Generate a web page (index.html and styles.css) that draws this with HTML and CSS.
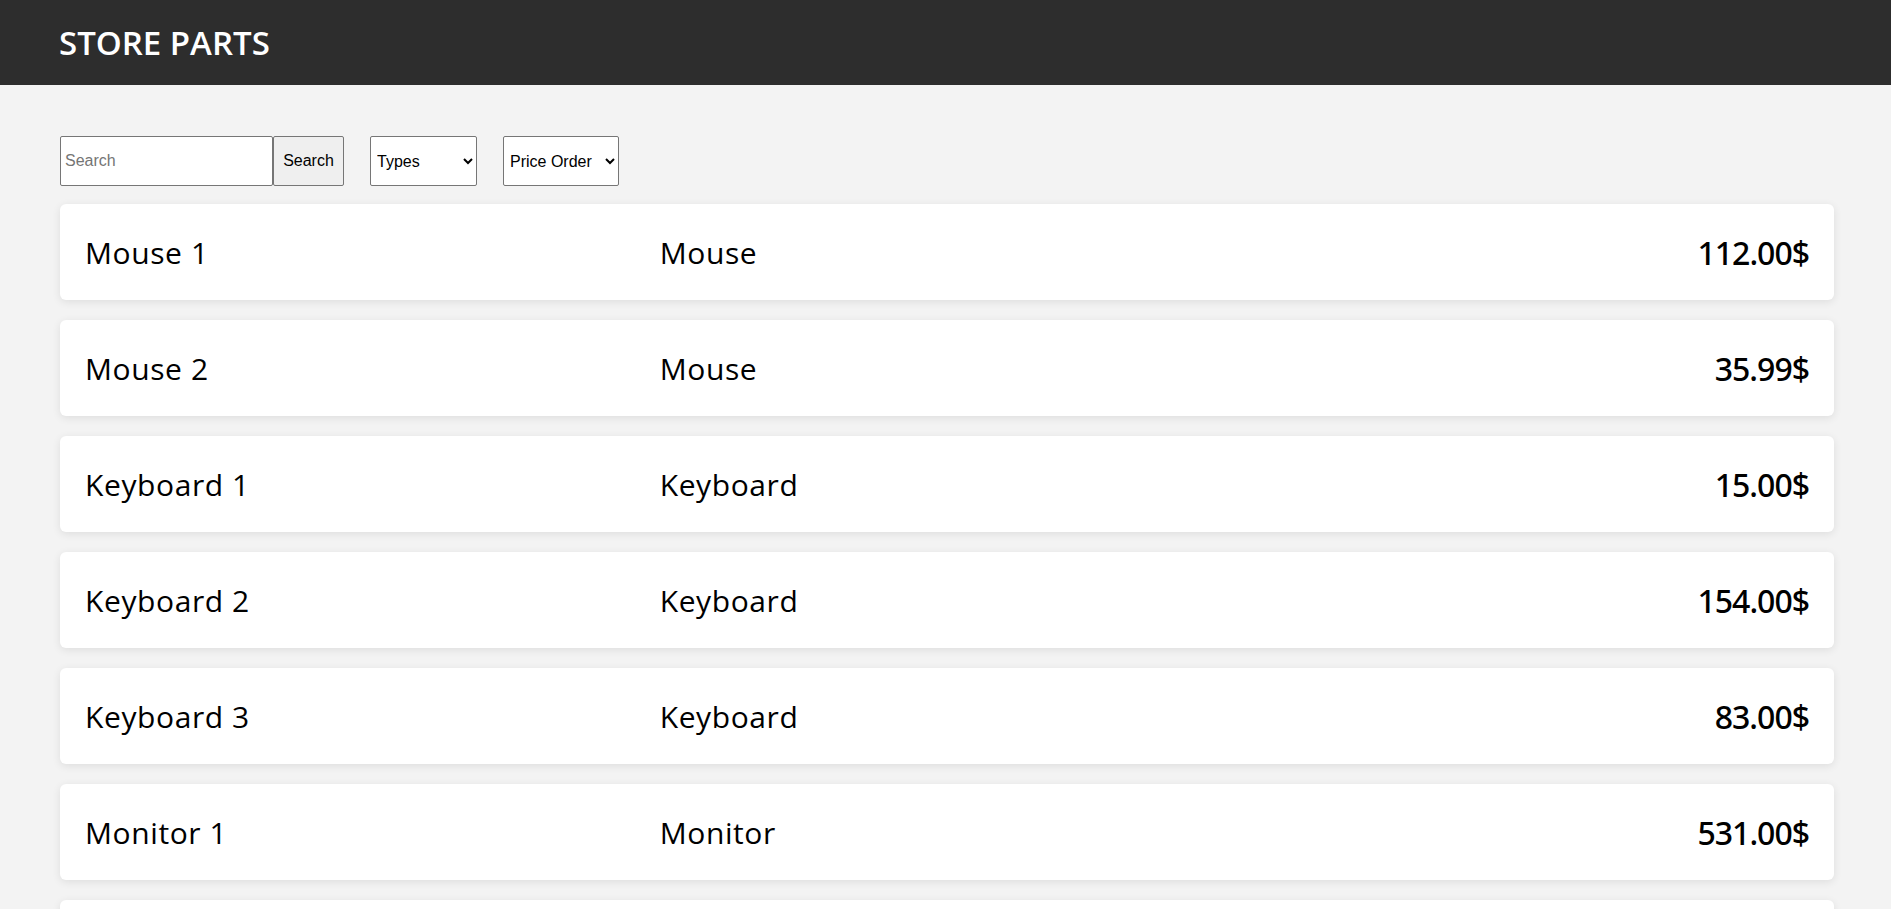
FILE: index.html
```html
<!DOCTYPE html>
<html lang="en">
<head>
<meta charset="utf-8">
<title>Store Parts</title>
<link rel="stylesheet" href="styles.css">
</head>
<body>
<header class="topbar">
  <h1 class="brand">STORE PARTS</h1>
</header>
<main class="content">
  <div class="toolbar">
    <div class="search-group">
      <input class="search-input" type="text" placeholder="Search">
      <button class="search-btn" type="button">Search</button>
    </div>
    <select class="select select-types">
      <option>Types</option>
      <option>Mouse</option>
      <option>Keyboard</option>
      <option>Monitor</option>
    </select>
    <select class="select select-price">
      <option>Price Order</option>
      <option>Ascending</option>
      <option>Descending</option>
    </select>
  </div>
  <ul class="parts">
    <li class="part"><span class="part-name">Mouse 1</span><span class="part-type">Mouse</span><span class="part-price">112.00$</span></li>
    <li class="part"><span class="part-name">Mouse 2</span><span class="part-type">Mouse</span><span class="part-price">35.99$</span></li>
    <li class="part"><span class="part-name">Keyboard 1</span><span class="part-type">Keyboard</span><span class="part-price">15.00$</span></li>
    <li class="part"><span class="part-name">Keyboard 2</span><span class="part-type">Keyboard</span><span class="part-price">154.00$</span></li>
    <li class="part"><span class="part-name">Keyboard 3</span><span class="part-type">Keyboard</span><span class="part-price">83.00$</span></li>
    <li class="part"><span class="part-name">Monitor 1</span><span class="part-type">Monitor</span><span class="part-price">531.00$</span></li>
    <li class="part"><span class="part-name">Monitor 2</span><span class="part-type">Monitor</span><span class="part-price">249.00$</span></li>
  </ul>
</main>
</body>
</html>
```

FILE: styles.css
```css
* {
  box-sizing: border-box;
}

html, body {
  margin: 0;
  padding: 0;
}

body {
  background: #f3f3f3;
  font-family: "Open Sans", "Liberation Sans", sans-serif;
  color: #000;
}

.topbar {
  background: #2d2d2d;
  height: 85px;
  display: flex;
  align-items: center;
  padding-left: 59px;
}

.brand {
  margin: 0;
  color: #fff;
  font-size: 33px;
  font-weight: 600;
  letter-spacing: 0;
  line-height: 1;
}

.content {
  padding: 51px 57px 40px 60px;
}

.toolbar {
  display: flex;
  align-items: center;
  gap: 26px;
  height: 50px;
  margin-bottom: 18px;
  font-family: "Liberation Sans", Arial, sans-serif;
}

.search-group {
  display: flex;
  height: 50px;
}

.search-input {
  width: 213px;
  height: 50px;
  margin: 0;
  padding: 0 4px;
  font-family: "Liberation Sans", Arial, sans-serif;
  font-size: 16px;
  border: 1px solid #767676;
  border-radius: 2px;
  background: #fff;
  color: #000;
}

.search-input::placeholder {
  color: #757575;
}

.search-btn {
  width: 71px;
  height: 50px;
  margin: 0;
  padding: 0;
  font-family: "Liberation Sans", Arial, sans-serif;
  font-size: 16px;
  color: #000;
  background: #efefef;
  border: 1px solid #767676;
  border-radius: 2px;
}

.select {
  height: 50px;
  margin: 0;
  padding: 0 2px;
  font-family: "Liberation Sans", Arial, sans-serif;
  font-size: 16px;
  color: #000;
  background: #fff;
  border: 1px solid #767676;
  border-radius: 2px;
}

.select-types {
  width: 107px;
}

.select-price {
  width: 116px;
}

.parts {
  list-style: none;
  margin: 0;
  padding: 0;
  display: flex;
  flex-direction: column;
  gap: 20px;
}

.part {
  display: grid;
  grid-template-columns: 1fr 1fr 1fr;
  align-items: center;
  height: 96px;
  padding: 0 25px;
  background: #fff;
  border-radius: 6px;
  box-shadow: 0 2px 8px rgba(0, 0, 0, 0.09);
  font-size: 30px;
  font-weight: 400;
  letter-spacing: 0.6px;
}

.part-price {
  text-align: right;
  font-family: "Noto Sans", "Open Sans", sans-serif;
  font-size: 32px;
  font-weight: 500;
  letter-spacing: -1px;
}
```
